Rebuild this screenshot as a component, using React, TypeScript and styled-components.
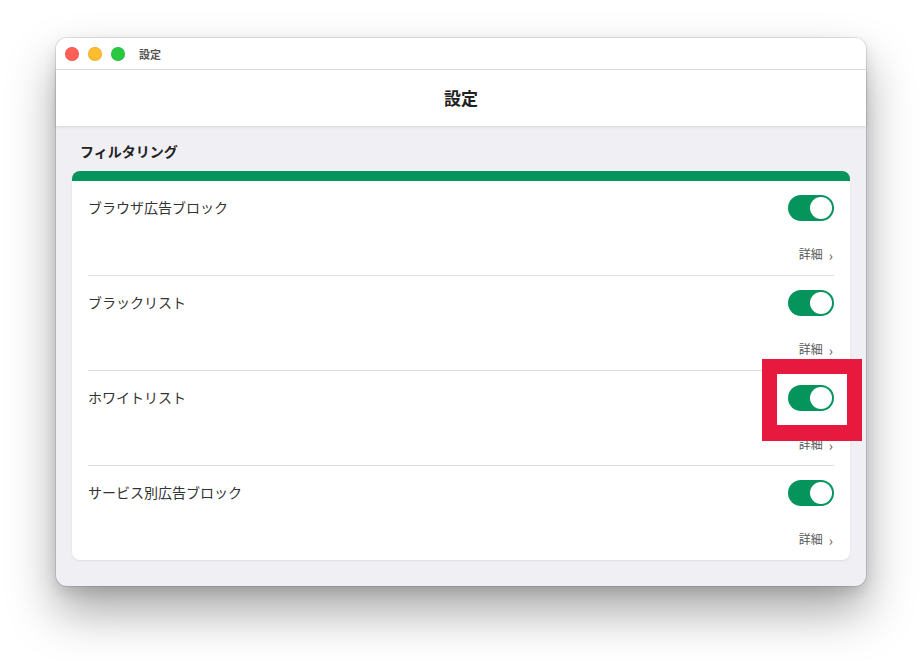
import styled, { createGlobalStyle } from "styled-components";
import { useState } from "react";

const GlobalStyle = createGlobalStyle`
  html, body {
    margin: 0;
    padding: 0;
    background: #ffffff;
    font-family: "Noto Sans CJK JP", "Noto Sans", sans-serif;
    -webkit-font-smoothing: antialiased;
  }
`;

const items = [
  { id: "browser", label: "ブラウザ広告ブロック" },
  { id: "black", label: "ブラックリスト" },
  { id: "white", label: "ホワイトリスト" },
  { id: "service", label: "サービス別広告ブロック" },
];

export default () => {
  const [enabled, setEnabled] = useState<Record<string, boolean>>({
    browser: true,
    black: true,
    white: true,
    service: true,
  });
  const toggle = (id: string) =>
    setEnabled((prev) => ({ ...prev, [id]: !prev[id] }));

  return (
    <Page>
      <GlobalStyle />
      <Window>
        <TitleBar>
          <Light color="#fe5f57" />
          <Light color="#febc2e" />
          <Light color="#28c840" />
          <WindowTitle>設定</WindowTitle>
        </TitleBar>
        <Header>設定</Header>
        <Content>
          <SectionLabel>フィルタリング</SectionLabel>
          <Card>
            {items.map((item) => (
              <Row key={item.id}>
                <RowTop>
                  <Label>{item.label}</Label>
                  <Switch
                    $on={enabled[item.id]}
                    onClick={() => toggle(item.id)}
                  />
                </RowTop>
                <Detail>
                  詳細 <Chevron>›</Chevron>
                </Detail>
              </Row>
            ))}
          </Card>
        </Content>
        <Highlight />
      </Window>
    </Page>
  );
};

const Page = styled.div`
  box-sizing: border-box;
  width: 922px;
  height: 661px;
  padding: 38px 0 0 56px;
  overflow: hidden;
  background: #ffffff;
`;

const Window = styled.div`
  position: relative;
  width: 810px;
  border-radius: 11px;
  background: #f0f0f4;
  box-shadow: 0 0 0 1px rgba(0, 0, 0, 0.1), 0 26px 48px rgba(0, 0, 0, 0.34),
    0 6px 14px rgba(0, 0, 0, 0.12);
`;

const TitleBar = styled.div`
  display: flex;
  align-items: center;
  height: 31px;
  padding: 0 9px;
  gap: 9px;
  background: #ffffff;
  border-bottom: 1px solid #dcdcdc;
  border-radius: 11px 11px 0 0;
`;

const Light = styled.span<{ color: string }>`
  width: 14px;
  height: 14px;
  border-radius: 50%;
  background: ${(p) => p.color};
  box-shadow: inset 0 0 0 0.5px rgba(0, 0, 0, 0.12);
`;

const WindowTitle = styled.span`
  margin-left: 5px;
  font-size: 11px;
  font-weight: 700;
  color: #555;
`;

const Header = styled.div`
  height: 56px;
  display: flex;
  align-items: center;
  justify-content: center;
  padding-bottom: 2px;
  box-sizing: border-box;
  background: #ffffff;
  font-size: 17px;
  font-weight: 700;
  color: #222;
  box-shadow: 0 1px 3px rgba(0, 0, 0, 0.12);
  position: relative;
`;

const Content = styled.div`
  padding: 15px 16px 26px;
`;

const SectionLabel = styled.div`
  padding-left: 8px;
  height: 20px;
  line-height: 20px;
  font-size: 14px;
  font-weight: 700;
  color: #222;
  margin-bottom: 10px;
`;

const Card = styled.div`
  background: #ffffff;
  border-radius: 8px;
  border-top: 10px solid #05945c;
  box-shadow: 0 1px 2px rgba(0, 0, 0, 0.08);
`;

const Row = styled.div`
  margin: 0 16px;
  padding: 14px 0 13px;
  border-bottom: 1px solid #dedede;
  &:last-child {
    border-bottom: none;
  }
`;

const RowTop = styled.div`
  display: flex;
  align-items: center;
  justify-content: space-between;
  height: 26px;
`;

const Label = styled.span`
  font-size: 14px;
  color: #333;
  padding-bottom: 3px;
`;

const Switch = styled.button<{ $on: boolean }>`
  position: relative;
  width: 46px;
  height: 26px;
  padding: 0;
  border: none;
  border-radius: 13px;
  cursor: pointer;
  background: ${(p) => (p.$on ? "#05945c" : "#cfcfcf")};
  &::after {
    content: "";
    position: absolute;
    top: 2px;
    left: ${(p) => (p.$on ? "22px" : "2px")};
    width: 22px;
    height: 22px;
    border-radius: 50%;
    background: #ffffff;
  }
`;

const Detail = styled.div`
  margin-top: 25px;
  height: 16px;
  display: flex;
  align-items: center;
  justify-content: flex-end;
  gap: 3px;
  font-size: 12px;
  color: #555;
  padding-bottom: 2px;
  box-sizing: border-box;
`;

const Chevron = styled.span`
  font-size: 14px;
  line-height: 16px;
  color: #555;
  padding: 0 1px 0 3px;
  transform: translateY(2px);
`;

const Highlight = styled.div`
  position: absolute;
  left: 706px;
  top: 321px;
  width: 100px;
  height: 82px;
  box-sizing: border-box;
  border: 15px solid #e8193f;
  border-bottom-width: 16px;
  pointer-events: none;
`;
